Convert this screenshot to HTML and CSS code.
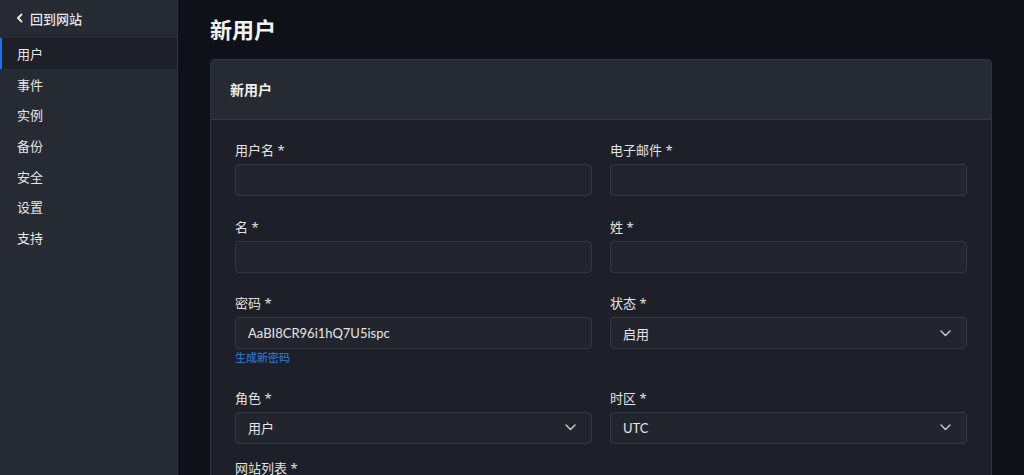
FILE: index.html
```html
<!DOCTYPE html>
<html lang="zh-CN">
<head>
  <meta charset="UTF-8" />
  <title>新用户</title>
  <link rel="stylesheet" href="styles.css">
</head>
<body>
  <aside class="sidebar">
    <a href="#" class="back">
      <svg width="10" height="10" viewBox="0 0 10 10"><path d="M6.5 1.5 L3 5 L6.5 8.5" fill="none" stroke="#e6e6e6" stroke-width="2" stroke-linecap="round" stroke-linejoin="round"/></svg>
      回到网站
    </a>
    <nav class="nav">
      <a href="#" class="nav-item active">用户</a>
      <a href="#" class="nav-item">事件</a>
      <a href="#" class="nav-item">实例</a>
      <a href="#" class="nav-item">备份</a>
      <a href="#" class="nav-item">安全</a>
      <a href="#" class="nav-item">设置</a>
      <a href="#" class="nav-item">支持</a>
    </nav>
  </aside>

  <main class="main">
    <h1>新用户</h1>
    <div class="card">
      <div class="card-head">新用户</div>
      <div class="card-body">
        <div class="field">
          <label>用户名 *</label>
          <input type="text" class="input" />
        </div>
        <div class="field">
          <label>电子邮件 *</label>
          <input type="text" class="input" />
        </div>
        <div class="field">
          <label>名 *</label>
          <input type="text" class="input" />
        </div>
        <div class="field">
          <label>姓 *</label>
          <input type="text" class="input" />
        </div>
        <div class="field">
          <label>密码 *</label>
          <input type="text" class="input" value="AaBI8CR96i1hQ7U5ispc" />
          <a href="#" class="gen">生成新密码</a>
        </div>
        <div class="field">
          <label>状态 *</label>
          <div class="select">启用<svg width="11" height="7" viewBox="0 0 11 7"><path d="M1 1 L5.5 5.5 L10 1" fill="none" stroke="#cfcfcf" stroke-width="1.4" stroke-linecap="round" stroke-linejoin="round"/></svg></div>
        </div>
        <div class="field">
          <label>角色 *</label>
          <div class="select">用户<svg width="11" height="7" viewBox="0 0 11 7"><path d="M1 1 L5.5 5.5 L10 1" fill="none" stroke="#cfcfcf" stroke-width="1.4" stroke-linecap="round" stroke-linejoin="round"/></svg></div>
        </div>
        <div class="field">
          <label>时区 *</label>
          <div class="select">UTC<svg width="11" height="7" viewBox="0 0 11 7"><path d="M1 1 L5.5 5.5 L10 1" fill="none" stroke="#cfcfcf" stroke-width="1.4" stroke-linecap="round" stroke-linejoin="round"/></svg></div>
        </div>
        <div class="field wide">
          <label>网站列表 *</label>
        </div>
      </div>
    </div>
  </main>
</body>
</html>
```

FILE: styles.css
```css
* {
  box-sizing: border-box;
}
body {
  margin: 0;
  height: 475px;
  overflow: hidden;
  display: flex;
  font-family: 'Noto Sans', 'Noto Sans CJK SC', sans-serif;
  background: #0e1117;
  color: #e6e6e6;
}
.sidebar {
  width: 178px;
  flex-shrink: 0;
  background: #262a33;
  border-right: 1px solid #31353e;
}
.back {
  height: 38px;
  display: flex;
  align-items: center;
  gap: 5px;
  padding: 0 14px 2px 15px;
  color: #e6e6e6;
  text-decoration: none;
  font-size: 13px;
  font-weight: 500;
}
.nav {
  display: flex;
  flex-direction: column;
}
.nav-item {
  height: 30.7px;
  display: flex;
  align-items: center;
  padding-left: 15px;
  color: #e6e6e6;
  text-decoration: none;
  font-size: 13px;
  border-left: 2px solid transparent;
}
.nav-item.active {
  background: #1d2028;
  border-left-color: #1f6feb;
}
.main {
  flex: 1;
  padding: 14px 32px 0 32px;
}
h1 {
  margin: 0 0 14px 0;
  font-size: 22px;
  line-height: 31px;
  font-weight: 700;
  color: #f2f2f2;
}
.card {
  background: #1d2028;
  border: 1px solid #30343c;
  border-radius: 4px;
}
.card-head {
  height: 60px;
  display: flex;
  align-items: center;
  padding: 0 19px 2px 19px;
  background: #262a33;
  border-bottom: 1px solid #353942;
  border-radius: 4px 4px 0 0;
  font-size: 14px;
  font-weight: 700;
  color: #f0f0f0;
}
.card-body {
  display: grid;
  grid-template-columns: 1fr 1fr;
  column-gap: 18px;
  row-gap: 20.5px;
  padding: 20px 24px 20px 24px;
}
.field {
  display: flex;
  flex-direction: column;
}
.field.wide {
  grid-column: 1 / -1;
  margin-top: -6px;
}
.field label {
  font-size: 13px;
  line-height: 20px;
  margin-bottom: 4px;
  color: #e3e3e3;
}
.input, .select {
  height: 32px;
  background: #22252d;
  border: 1px solid #343841;
  border-radius: 4px;
  padding: 0 12px;
  font-family: Lato, 'Noto Sans CJK SC', sans-serif;
  font-size: 13px;
  color: #e6e6e6;
  outline: none;
}
.select {
  display: flex;
  align-items: center;
  justify-content: space-between;
  padding-right: 15px;
}
.gen {
  font-size: 11px;
  line-height: 18px;
  color: #2f6ec2;
  text-decoration: none;
  font-weight: 500;
}
```
